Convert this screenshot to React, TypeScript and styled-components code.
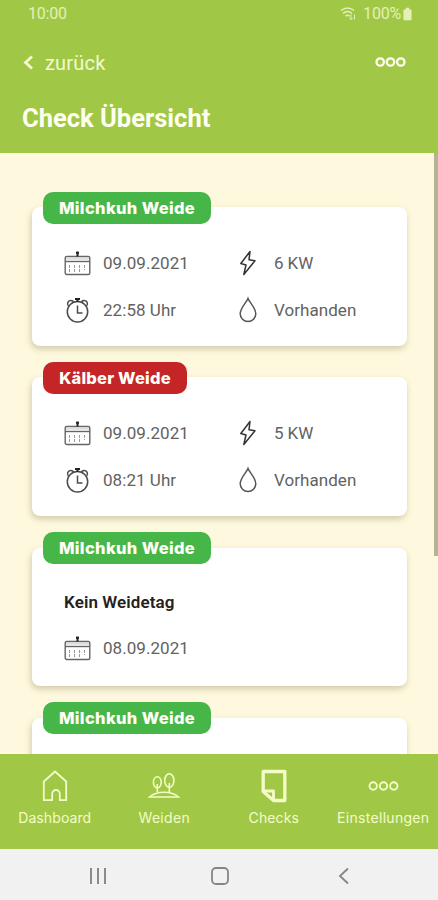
import React from "react";
import styled, { createGlobalStyle } from "styled-components";

const GlobalStyle = createGlobalStyle`
  * { box-sizing: border-box; }
  body { margin: 0; background: #fef8de; }
`;

const Screen = styled.div`
  width: 438px;
  height: 900px;
  display: flex;
  flex-direction: column;
  overflow: hidden;
  font-family: Roboto, "Liberation Sans", sans-serif;
  background: #fef8de;
`;

const Header = styled.header`
  height: 153px;
  flex: none;
  background: #a0c846;
  color: #fffff0;
`;

const StatusBar = styled.div`
  height: 28px;
  padding: 0 26px 0 28px;
  display: flex;
  align-items: center;
  justify-content: space-between;
  color: #e3f1b6;
  font-size: 16px;
  line-height: 28px;
  letter-spacing: -0.2px;
`;

const StatusIcons = styled.div`
  display: flex;
  align-items: center;
  gap: 2px;
`;

const WifiIcon = styled.svg`
  margin-right: 4px;
`;

const TopBar = styled.div`
  height: 68px;
  padding: 0 32px 0 22px;
  display: flex;
  align-items: center;
  justify-content: space-between;
`;

const BackButton = styled.button`
  padding: 1px 0 0;
  border: 0;
  background: none;
  color: #f3facb;
  font: 400 20px/24px Roboto, sans-serif;
  letter-spacing: 0.2px;
  display: flex;
  align-items: center;
  gap: 10px;
`;

const Title = styled.h1`
  margin: 6px 0 0 22px;
  font-size: 25.5px;
  line-height: 32px;
  font-weight: 700;
`;

const Content = styled.main`
  height: 601px;
  flex: none;
  display: flex;
  overflow: hidden;
`;

const CardList = styled.div`
  flex: 1;
  padding: 38.6px 27px 0 32px;
`;

const ScrollThumb = styled.div`
  width: 4px;
  height: 403px;
  background: #b5b295;
`;

const CardSlot = styled.section`
  height: 170.2px;
  display: flex;
  flex-direction: column;
`;

const Badge = styled.h2<{ $alert?: boolean; $width: number }>`
  margin: 0 0 -16.4px 11px;
  width: ${(p) => p.$width}px;
  height: 32px;
  flex: none;
  z-index: 1;
  border-radius: 10px;
  background: ${(p) => (p.$alert ? "#c42527" : "#47b649")};
  color: #fffff8;
  font: 800 16.5px/32px Inter, sans-serif;
  letter-spacing: ${(p) => (p.$alert ? "0.2px" : "0.35px")};
  text-align: center;
  white-space: nowrap;
`;

const CardBody = styled.div`
  height: 138.7px;
  flex: none;
  padding: 32px 16px 0 32px;
  border-radius: 8px;
  background: #fff;
  box-shadow: -1px 3px 6px rgba(90, 85, 40, 0.28);
`;

const Facts = styled.div`
  display: grid;
  grid-template-columns: 170px 1fr;
  grid-auto-rows: 47px;
`;

const Fact = styled.div<{ $narrow?: boolean }>`
  height: 47px;
  display: grid;
  grid-template-columns: ${(p) => (p.$narrow ? "40px" : "39px")} 1fr;
  align-items: center;
  color: #626262;
  font-size: 17px;
  line-height: 20px;
  white-space: nowrap;

  svg { display: block; margin-left: ${(p) => (p.$narrow ? "4px" : "0")}; }
`;

const FactText = styled.span<{ $spacing?: number }>`
  letter-spacing: ${(p) => p.$spacing ?? 0.05}px;
`;

const Notice = styled.h3`
  margin: 0;
  height: 45px;
  font-size: 17px;
  line-height: 45px;
  font-weight: 600;
  letter-spacing: 0.1px;
  color: #222;
`;

const TabBar = styled.nav`
  height: 95px;
  flex: none;
  display: grid;
  grid-template-columns: repeat(4, 1fr);
  background: #a0c846;
  color: #f4fcc8;
`;

const Tab = styled.div<{ $spacing: number }>`
  padding-top: 13px;
  display: flex;
  flex-direction: column;
  align-items: center;
  font: 400 14px/18px Inter, sans-serif;
  letter-spacing: ${(p) => p.$spacing}px;
  white-space: nowrap;
`;

const TabIcon = styled.div`
  height: 38px;
  margin-bottom: 4px;
  display: flex;
  align-items: center;
`;

const SystemBar = styled.footer`
  height: 51px;
  flex: none;
  padding: 2px 34px 0 37px;
  display: grid;
  grid-template-columns: repeat(3, 1fr);
  place-items: center;
  background: #f1f1f1;
`;

const Dots = ({ weight }: { weight: number }) => (
  <svg width="31" height="12" viewBox="0 0 31 12" fill="none" stroke="currentColor" strokeWidth={weight}>
    <circle cx="5.2" cy="6" r="3.7" />
    <circle cx="15.5" cy="6" r="3.7" />
    <circle cx="25.8" cy="6" r="3.7" />
  </svg>
);

const CalendarIcon = () => (
  <svg width="27" height="26" viewBox="0 0 27 26" fill="none" stroke="#666">
    <rect x="1.2" y="6.5" width="24.6" height="18" rx="1.5" strokeWidth="1.4" />
    <path d="M2 8.700h23" stroke="#ddd" strokeWidth="2" />
    <path d="M1 11.500h25" strokeWidth="1.400" />
    <path d="M13.500 1.500v5M12 2.800h3" stroke="#222" strokeWidth="2" />
    <path d="M5.500 15v7M10.500 15v7M15.500 15v7M20.500 15v5" stroke="#999" strokeDasharray="3 1" />
  </svg>
);

const ClockIcon = () => (
  <svg width="27" height="28" viewBox="0 0 27 28" fill="none" stroke="#4c4c4c" strokeWidth="1.500">
    <circle cx="13.500" cy="15.800" r="10.200" />
    <path d="M13.500 9.500V17h5" />
    <path d="M4.400 10C2.500 7.500 4 4.500 7 4.500c1.500 0 2.300.8 3 2M22.600 10c1.900-2.500.4-5.500-2.600-5.500-1.500 0-2.300.8-3 2" />
    <path d="M11 3h5M13.500 3v3" stroke="#222" strokeWidth="2" />
  </svg>
);

const BoltIcon = () => (
  <svg width="20" height="28" viewBox="0 0 20 28" fill="none" stroke="#333" strokeWidth="1.500" strokeLinejoin="round">
    <path d="M12 2.500 2.800 14.500l5.200 1.500-2.200 9.500L17 11.800l-6-1Z" />
  </svg>
);

const DropIcon = () => (
  <svg width="20" height="28" viewBox="0 0 20 28" fill="none" stroke="#555" strokeWidth="1.500">
    <path d="M10 2.500C8.500 6.500 2.200 12 2.200 17.800a7.800 7.800 0 0 0 15.600 0C17.800 12 11.500 6.500 10 2.500Z" />
  </svg>
);

const HouseIcon = () => (
  <svg width="26" height="32" viewBox="0 0 26 32" fill="none" stroke="currentColor" strokeWidth="1.800" strokeLinejoin="round">
    <path d="M1.800 11.500 13 1.500l11.200 10v18.700h-6.400v-6.400a3.800 3.800 0 0 0-7.600 0v6.400H1.800Z" />
  </svg>
);

const TreesIcon = () => (
  <svg width="32" height="28" viewBox="0 0 32 28" fill="none" stroke="currentColor" strokeWidth="1.600">
    <ellipse cx="9.300" cy="10.300" rx="3.900" ry="5.500" />
    <ellipse cx="21.300" cy="8.600" rx="4.600" ry="6.800" />
    <path d="M9.300 12v8M21.300 11v9M1.500 25c7-6.300 22-6.300 29 0Z" />
  </svg>
);

const ChecksIcon = () => (
  <svg width="28" height="34" viewBox="0 0 28 34" fill="none" stroke="currentColor" strokeWidth="3.300" strokeLinejoin="round">
    <path d="M3.200 2.500h21.600v29H13.500L3.200 22.500Z" />
    <path d="M4 22h9.500v8" strokeWidth="2.800" />
  </svg>
);

type Check = { name: string; alert?: boolean; width: number; date?: string; time?: string; power?: string };

const checks: Check[] = [
  { name: "Milchkuh Weide", width: 168, date: "09.09.2021", time: "22:58 Uhr", power: "6 KW" },
  { name: "Kälber Weide", width: 144, alert: true, date: "09.09.2021", time: "08:21 Uhr", power: "5 KW" },
  { name: "Milchkuh Weide", width: 168, date: "08.09.2021" },
  { name: "Milchkuh Weide", width: 168 },
];

const CheckCard = ({ check }: { check: Check }) => (
  <CardSlot>
    <Badge $alert={check.alert} $width={check.width}>{check.name}</Badge>
    <CardBody>
      {check.time && (
        <Facts>
          <Fact><CalendarIcon /><FactText>{check.date}</FactText></Fact>
          <Fact $narrow><BoltIcon /><FactText $spacing={-0.1}>{check.power}</FactText></Fact>
          <Fact><ClockIcon /><FactText>{check.time}</FactText></Fact>
          <Fact $narrow><DropIcon /><FactText>Vorhanden</FactText></Fact>
        </Facts>
      )}
      {check.date && !check.time && (
        <>
          <Notice>Kein Weidetag</Notice>
          <Fact><CalendarIcon /><FactText>{check.date}</FactText></Fact>
        </>
      )}
    </CardBody>
  </CardSlot>
);

export default function App() {
  return (
    <Screen>
      <GlobalStyle />
      <Header>
        <StatusBar>
          <span>10:00</span>
          <StatusIcons>
            <WifiIcon width="17" height="16" viewBox="0 0 17 16" fill="none" stroke="currentColor" strokeWidth="1.500">
              <path d="M1 4.500q6.500-5 13 0M3 7.500q4.500-4 9 0M5.500 10.200q2-2 4 0" />
              <path d="M11 8.500v5M9.300 12l1.700 1.700 1.700-1.700M14.500 13.500v-5" strokeWidth="1" />
            </WifiIcon>
            <span>100%</span>
            <svg width="9" height="14" viewBox="0 0 10 14" fill="currentColor">
              <path d="M3 0h4v2h1.500a1 1 0 0 1 1 1v10a1 1 0 0 1-1 1h-7a1 1 0 0 1-1-1V3a1 1 0 0 1 1-1H3Z" />
            </svg>
          </StatusIcons>
        </StatusBar>
        <TopBar>
          <BackButton>
            <svg width="13" height="16" viewBox="0 0 13 16" fill="none" stroke="currentColor" strokeWidth="2.800">
              <path d="M10 1.500 3.500 7.500l6.500 6" />
            </svg>
            zurück
          </BackButton>
          <Dots weight={2.3} />
        </TopBar>
        <Title>Check Übersicht</Title>
      </Header>
      <Content>
        <CardList>
          {checks.map((check, i) => <CheckCard key={i} check={check} />)}
        </CardList>
        <ScrollThumb />
      </Content>
      <TabBar>
        <Tab $spacing={0.1}><TabIcon><HouseIcon /></TabIcon>Dashboard</Tab>
        <Tab $spacing={0.3}><TabIcon><TreesIcon /></TabIcon>Weiden</Tab>
        <Tab $spacing={0.1}><TabIcon><ChecksIcon /></TabIcon>Checks</Tab>
        <Tab $spacing={0.3}><TabIcon><Dots weight={1.9} /></TabIcon>Einstellungen</Tab>
      </TabBar>
      <SystemBar>
        <svg width="18" height="18" viewBox="0 0 18 18" stroke="#8b8b8b" strokeWidth="2">
          <path d="M2 1v16M9 1v16M16 1v16" />
        </svg>
        <svg width="18" height="18" viewBox="0 0 18 18" fill="none" stroke="#858585" strokeWidth="1.800">
          <rect x="1" y="1" width="16" height="16" rx="4" />
        </svg>
        <svg width="12" height="18" viewBox="0 0 12 18" fill="none" stroke="#858585" strokeWidth="1.800">
          <path d="M11 1.500 3 9l8 7.500" />
        </svg>
      </SystemBar>
    </Screen>
  );
}
